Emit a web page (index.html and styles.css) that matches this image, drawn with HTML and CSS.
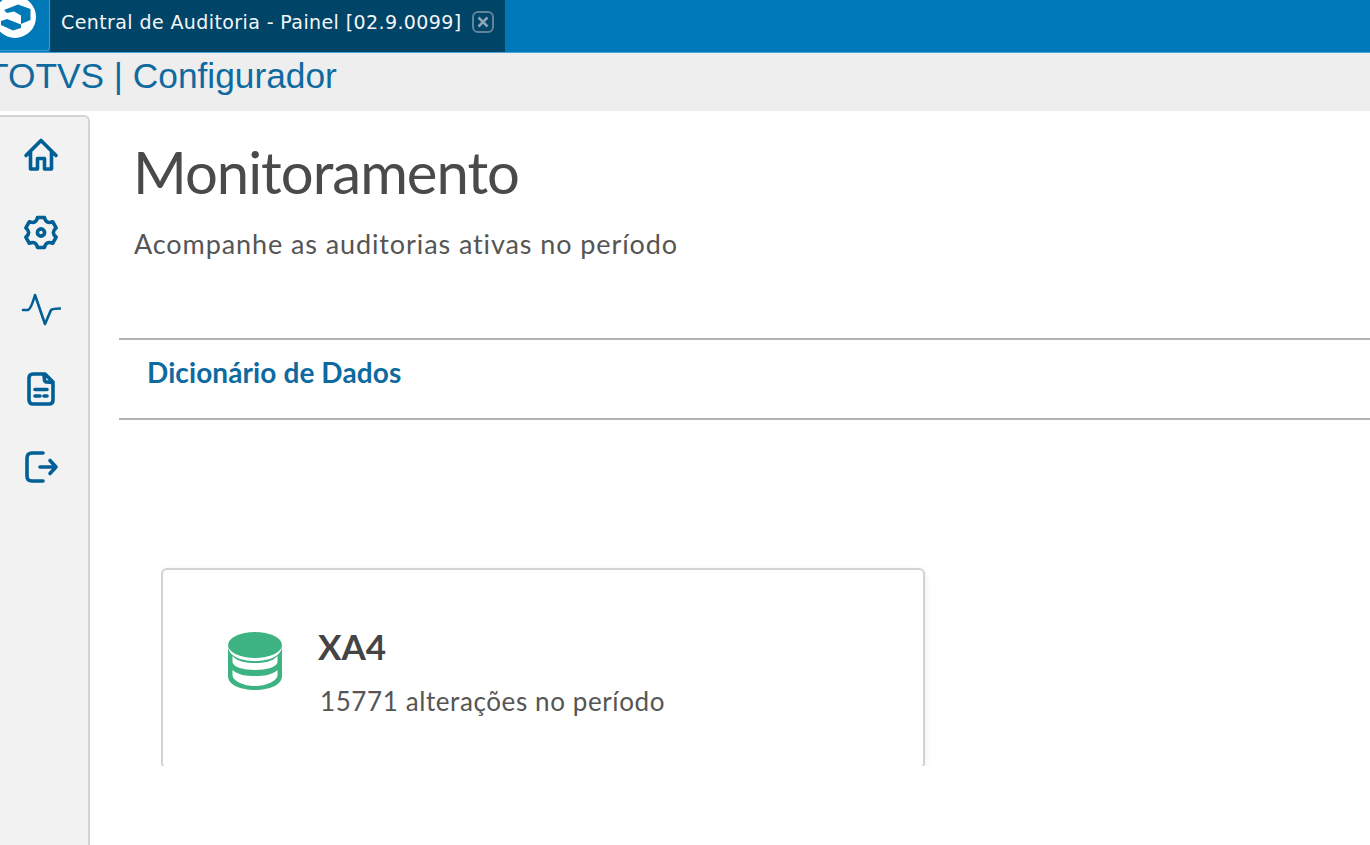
FILE: index.html
```html
<!DOCTYPE html>
<html lang="pt-BR">
<head>
<meta charset="utf-8">
<title>Central de Auditoria</title>
<link rel="stylesheet" href="styles.css">
</head>
<body>
<header class="topbar">
  <div class="logo-tab">
    <svg class="logo" viewBox="0 0 44 44" width="44" height="44" aria-hidden="true">
      <circle cx="15" cy="17" r="18" fill="#fff" stroke="#fff" stroke-width="6"/>
      <path d="M4 10 L18 4.500 L30.500 9 L30.500 20 L21 24 L21 15.500 L14 11.500 L7 13 Z" fill="#0079b8"/>
      <path d="M7 19 L21 24.500 L21 28 L13 30.500 L1 25 L1 21 Z" fill="#0079b8"/>
    </svg>
  </div>
  <div class="tab">
    <span class="tab-label">Central de Auditoria - Painel [02.9.0099]</span>
    <svg class="tab-close" viewBox="0 0 24 24" width="24" height="24" aria-hidden="true">
      <rect x="2" y="2" width="20" height="20" rx="5" fill="none" stroke="#648298" stroke-width="2"/>
      <path d="M7.500 7.500 L16.500 16.500 M16.500 7.500 L7.500 16.500" stroke="#8aa3b5" stroke-width="2.600"/>
    </svg>
  </div>
</header>
<div class="appbar"><span class="app-title">TOTVS | Configurador</span></div>
<div class="body">
  <nav class="side">
    <svg class="ico" viewBox="0 0 36 36" width="36" height="36"><path d="M3 18.500 L18 3.500 L33 18.500 M7.500 15 V32 H14.500 V21.500 H21.500 V32 H28.500 V15"/></svg>
    <svg class="ico" viewBox="0 1 36 36" width="36" height="36"><path d="M14.500 3.500 H21.500 Q22.750 10.300 29.650 7.720 L33.150 13.780 Q27.500 18.500 33.150 23.220 L29.650 29.280 Q22.750 26.700 21.500 33.500 H14.500 Q13.250 26.700 6.350 29.280 L2.850 23.220 Q8.500 18.500 2.850 13.780 L6.350 7.720 Q13.250 10.300 14.500 3.500 Z"/><circle cx="18" cy="18.500" r="3.600"/></svg>
    <svg class="ico ico-thin" viewBox="0 2 40 36" width="40" height="36"><path d="M2 19 H7 Q10 18 14 4 L24 33 L30 19 Q32 17.500 39 17.500"/></svg>
    <svg class="ico" viewBox="0 0 36 36" width="36" height="36"><path d="M6 7 Q6 3 10 3 H22 L30 11 V29 Q30 33 26 33 H10 Q6 33 6 29 Z M21 4 L21.500 9 Q22 11 24 11 L29 11.500 M12 18.500 H24 M12 25 H17 M21 25 H24"/></svg>
    <svg class="ico" viewBox="0 0 36 36" width="36" height="36"><path d="M20 4 H9 Q4 4 4 9 V27 Q4 32 9 32 H20 M17 18 H33 M27 11.500 L33 18 L27 24.500"/></svg>
  </nav>
  <main class="main">
    <section class="page-head">
      <h1 class="page-title">Monitoramento</h1>
      <p class="page-sub">Acompanhe as auditorias ativas no período</p>
    </section>
    <div class="section-bar"><h2 class="section-title">Dicionário de Dados</h2></div>
    <div class="card-clip">
      <article class="card">
        <svg class="db" viewBox="0 0 54 60" width="54" height="60" aria-hidden="true">
          <ellipse cx="27" cy="13" rx="27" ry="13" fill="#3db382"/>
          <path d="M0 14 V44 C0 53 13 58 27 58 C41 58 54 53 54 44 V14 C54 24 41 29 27 29 C13 29 0 24 0 14 Z" fill="#3db382"/>
          <path d="M4.500 24 C10 30 18 31 27 31 C36 31 44 30 49.500 24 V30 C49.500 35 38 38 27 38 C16 38 4.500 35 4.500 30 Z" fill="#fff"/>
          <path d="M4.500 38 C10 43 18 44 27 44 C36 44 44 43 49.500 38 V43 C49.500 49 38 54 27 54 C16 54 4.500 49 4.500 43 Z" fill="#fff"/>
        </svg>
        <div class="card-text">
          <div class="card-title">XA4</div>
          <div class="card-sub">15771 alterações no período</div>
        </div>
      </article>
    </div>
  </main>
</div>
</body>
</html>
```
FILE: styles.css
```css
* { box-sizing: border-box; }
html, body { margin: 0; height: 100%; overflow: hidden; background: #fff; }
body { font-family: "Lato", "Open Sans", sans-serif; width: 1370px; height: 845px; display: flex; flex-direction: column; }

.topbar { height: 53px; flex: none; background: #0079b8; display: flex; border-bottom: 1px solid #4aa3d6; }
.logo-tab { width: 50px; height: 51px; background: #0079b8; border-right: 1px solid #3a9ad0; border-bottom: 1px solid #3a9ad0; border-bottom-right-radius: 4px; overflow: hidden; display: flex; align-items: flex-start; flex: none; }
.logo { flex: none; }
.tab { width: 455px; height: 52px; background: #004468; display: flex; align-items: center; padding: 0 0 9px 11px; }
.tab-label { font-family: "DejaVu Sans", sans-serif; font-size: 19px; color: #f4f6f8; white-space: nowrap; width: 411px; flex: none; letter-spacing: 0.4px; }
.tab-close { flex: none; margin-left: -1px; }

.appbar { height: 58px; flex: none; background: #eeeeee; display: flex; align-items: center; padding-bottom: 12px; }
.app-title { font-family: "Liberation Sans", Arial, sans-serif; font-size: 35.3px; color: #0e6a9f; margin-left: -13px; white-space: nowrap; }

.body { flex: 1; display: flex; min-height: 0; }
.side { width: 90px; flex: none; background: #f2f2f2; border-right: 2px solid #d4d4d4; border-top: 2px solid #d4d4d4; border-top-right-radius: 6px; display: flex; flex-direction: column; align-items: center; gap: 42px; padding: 20px 6px 0 0; margin-top: 4px; }
.ico { fill: none; stroke: #005f94; stroke-width: 3.6; stroke-linecap: round; stroke-linejoin: round; flex: none; display: block; }
.ico-thin { stroke-width: 2.6; }

.main { flex: 1; min-width: 0; padding: 0 0 0 29px; }
.page-head { padding: 26px 0 0 15px; height: 227px; }
.page-title { margin: 0 0 0 -1px; font-size: 58px; font-weight: 400; line-height: 70px; color: #4a4a4a; letter-spacing: -1px; }
.page-sub { margin: 20px 0 0; font-size: 27px; line-height: 34px; color: #555; letter-spacing: 0.9px; }
.section-bar { height: 82px; border-top: 2px solid #b3b3b3; border-bottom: 2px solid #b3b3b3; display: flex; align-items: center; padding: 0 0 14px 28px; }
.section-title { margin: 0; font-size: 28px; font-weight: 700; color: #0e6a9f; letter-spacing: 0.1px; }

.card-clip { margin: 146px 0 0 42px; width: 780px; height: 200px; overflow: hidden; padding: 2px 14px 0 0; }
.card { height: 201px; width: 764px; background: #fff; border: 2px solid #d2d2d2; border-radius: 6px; box-shadow: 0 2px 8px rgba(0,0,0,0.08); display: flex; padding: 62px 0 0 65px; gap: 36px; }
.db { flex: none; }
.card-text { margin-top: -2px; }
.card-title { font-size: 35px; font-weight: 700; line-height: 32px; color: #444; }
.card-sub { margin: 22px 0 0 2px; font-size: 26px; line-height: 34px; color: #555; letter-spacing: 0.6px; }
```
